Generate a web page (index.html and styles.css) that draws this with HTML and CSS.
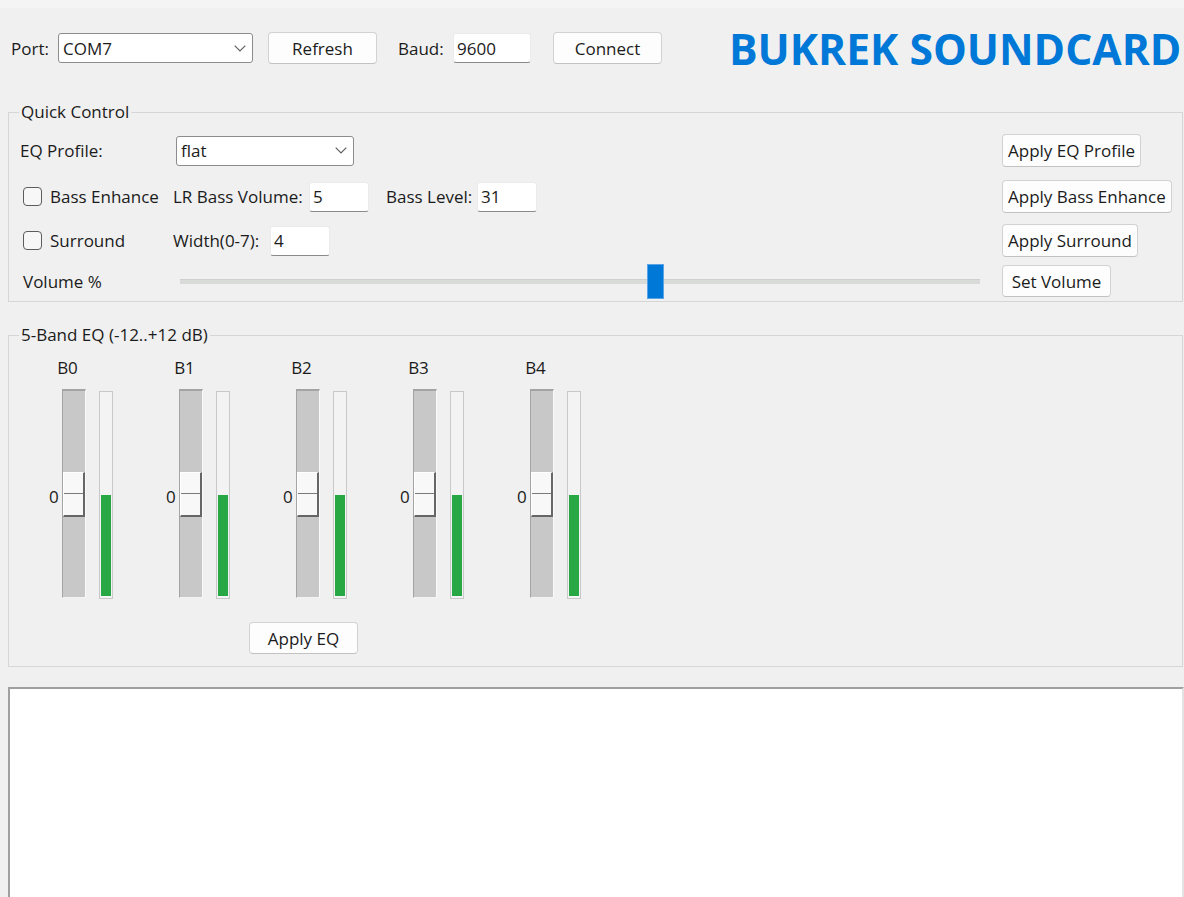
FILE: index.html
```html
<!DOCTYPE html>
<html lang="en">
<head>
<meta charset="utf-8">
<title>BUKREK SOUNDCARD</title>
<link rel="stylesheet" href="styles.css">
</head>
<body>
<div class="app">
  <div class="topbar">
    <span class="lbl lbl-port">Port:</span>
    <div class="combo combo-port"><span>COM7</span>
      <svg class="chev" width="12" height="7" viewBox="0 0 12 7"><polyline points="0.7,0.7 6,6 11.3,0.7" fill="none" stroke="#5f5f5f" stroke-width="1.2"/></svg>
    </div>
    <button class="btn btn-refresh">Refresh</button>
    <span class="lbl lbl-baud">Baud:</span>
    <div class="entry entry-baud">9600</div>
    <button class="btn btn-connect">Connect</button>
    <h1 class="title">BUKREK SOUNDCARD</h1>
  </div>

  <fieldset class="group group-quick">
    <legend>Quick Control</legend>
    <div class="quick-grid">
      <div class="cell c1 pad-eq">EQ Profile:</div>
      <div class="cell c2">
        <div class="combo combo-eq"><span>flat</span>
          <svg class="chev" width="12" height="7" viewBox="0 0 12 7"><polyline points="0.7,0.7 6,6 11.3,0.7" fill="none" stroke="#5f5f5f" stroke-width="1.2"/></svg>
        </div>
      </div>
      <div class="cell c3"><button class="btn btn-q">Apply EQ Profile</button></div>

      <div class="cell c1 pad-chk"><span class="chk"></span><span>Bass Enhance</span></div>
      <div class="cell c2">
        <span class="lbl lbl-lrbass">LR Bass Volume:</span>
        <div class="entry entry-sm">5</div>
        <span class="lbl lbl-basslevel">Bass Level:</span>
        <div class="entry entry-sm">31</div>
      </div>
      <div class="cell c3"><button class="btn btn-q">Apply Bass Enhance</button></div>

      <div class="cell c1 pad-chk"><span class="chk"></span><span>Surround</span></div>
      <div class="cell c2">
        <span class="lbl lbl-width">Width(0-7):</span>
        <div class="entry entry-sm">4</div>
      </div>
      <div class="cell c3"><button class="btn btn-q">Apply Surround</button></div>

      <div class="cell cell-last c1 pad-chk">Volume %</div>
      <div class="cell cell-last c2">
        <div class="slider" style="--v:0.597">
          <div class="track"></div>
          <div class="knob"></div>
        </div>
      </div>
      <div class="cell cell-last c3"><button class="btn">Set Volume</button></div>
    </div>
  </fieldset>

  <fieldset class="group group-eq">
    <legend>5-Band EQ (-12..+12 dB)</legend>
    <div class="bands">
      <div class="band">
        <div class="scale-col">
          <div class="band-name">B0</div>
          <div class="scale"><span class="scale-val">0</span><div class="trough"><div class="thumb"></div></div></div>
        </div>
        <div class="meter"><div class="meter-fill" style="height:50%"></div></div>
      </div>
      <div class="band">
        <div class="scale-col">
          <div class="band-name">B1</div>
          <div class="scale"><span class="scale-val">0</span><div class="trough"><div class="thumb"></div></div></div>
        </div>
        <div class="meter"><div class="meter-fill" style="height:50%"></div></div>
      </div>
      <div class="band">
        <div class="scale-col">
          <div class="band-name">B2</div>
          <div class="scale"><span class="scale-val">0</span><div class="trough"><div class="thumb"></div></div></div>
        </div>
        <div class="meter"><div class="meter-fill" style="height:50%"></div></div>
      </div>
      <div class="band">
        <div class="scale-col">
          <div class="band-name">B3</div>
          <div class="scale"><span class="scale-val">0</span><div class="trough"><div class="thumb"></div></div></div>
        </div>
        <div class="meter"><div class="meter-fill" style="height:50%"></div></div>
      </div>
      <div class="band">
        <div class="scale-col">
          <div class="band-name">B4</div>
          <div class="scale"><span class="scale-val">0</span><div class="trough"><div class="thumb"></div></div></div>
        </div>
        <div class="meter"><div class="meter-fill" style="height:50%"></div></div>
      </div>
    </div>
    <div class="eq-actions"><button class="btn">Apply EQ</button></div>
  </fieldset>

  <textarea class="log" readonly></textarea>
</div>
</body>
</html>
```

FILE: styles.css
```css
html, body {
  margin: 0;
  padding: 0;
}

body {
  width: 1184px;
  height: 897px;
  overflow: hidden;
  background: #f0f0f0;
  font-family: "Open Sans", "Noto Sans", sans-serif;
  font-size: 17px;
  color: #1b1b1b;
}

.app {
  border-top: 8px solid #f4f4f4;
}

/* ---------- top bar ---------- */
.topbar {
  display: flex;
  align-items: center;
  height: 32px;
  margin-top: 24px;
  padding-left: 11px;
  white-space: nowrap;
}

.lbl {
  white-space: nowrap;
}

.lbl-port { width: 47px; flex: none; }
.lbl-baud { width: 55px; flex: none; margin-left: 21px; }

.combo {
  box-sizing: border-box;
  display: flex;
  align-items: center;
  justify-content: space-between;
  height: 30px;
  padding: 0 6px 0 4px;
  background: #ffffff;
  border: 1px solid #8c8c8c;
  border-radius: 3px;
  flex: none;
}

.combo-port { width: 195px; }
.combo-eq { width: 178px; margin-left: 3px; }

.chev { display: block; }

.entry {
  box-sizing: border-box;
  display: flex;
  align-items: center;
  height: 30px;
  padding-left: 3px;
  background: #ffffff;
  border: 1px solid #ebebeb;
  border-bottom-color: #8a8a8a;
  border-radius: 3px;
  flex: none;
}

.entry-baud { width: 78px; }
.entry-sm { width: 60px; }

.btn {
  box-sizing: border-box;
  display: inline-flex;
  align-items: center;
  justify-content: center;
  height: 32px;
  min-width: 109px;
  padding: 0 5px;
  margin: 0;
  background: #fdfdfd;
  border: 1px solid #d2d2d2;
  border-bottom-color: #c2c2c2;
  border-radius: 4px;
  font: inherit;
  color: #1b1b1b;
  white-space: nowrap;
  flex: none;
}

.btn-q { height: 33px; }
.btn-refresh { margin-left: 15px; }
.btn-connect { margin-left: 22px; }

.title {
  margin: 0 0 0 67px;
  font-size: 42.6px;
  line-height: 1;
  font-weight: 700;
  color: #0078d7;
  white-space: nowrap;
}

/* ---------- group frames ---------- */
.group {
  box-sizing: border-box;
  width: 1175px;
  min-width: 0;
  margin: 0 0 0 8px;
  border: 1px solid #d6d6d6;
}

.group legend {
  margin-left: 10px;
  padding: 0 2px;
  line-height: 20px;
  font-size: 17px;
}

.group-quick {
  margin-top: 38px;
  padding: 12px 0 4px 0;
}

.group-eq {
  margin-top: 23px;
  padding: 13px 0 12px 0;
}

/* ---------- quick control grid ---------- */
.quick-grid {
  display: grid;
  grid-template-columns: 164px 829px auto;
  grid-template-rows: 46px 44px 41px 32px;
  align-items: start;
}

.cell {
  display: flex;
  align-items: center;
  height: 33px;
  white-space: nowrap;
}

.cell-last { height: 32px; }

.pad-eq { padding-left: 11px; }
.pad-chk { padding-left: 14px; }

.chk {
  box-sizing: border-box;
  width: 19px;
  height: 19px;
  margin-right: 8px;
  background: #f7f7f7;
  border: 1px solid #5c5c5c;
  border-radius: 4px;
  flex: none;
}

.lbl-lrbass { width: 136px; flex: none; }
.lbl-basslevel { width: 91px; margin-left: 17px; flex: none; }
.lbl-width { width: 97px; flex: none; }

/* ---------- volume slider ---------- */
.slider {
  position: relative;
  display: flex;
  align-items: center;
  width: 800px;
  height: 35px;
  margin-left: 7px;
}

.track {
  width: 100%;
  height: 4px;
  background: #d9dbd9;
  border-top: 1px solid #cdd0cd;
}

.knob {
  position: absolute;
  top: 0;
  left: calc(var(--v) * (100% - 17px));
  box-sizing: border-box;
  width: 17px;
  height: 35px;
  background: #0078d7;
  border: 1px solid #5aa3e6;
}

/* ---------- EQ bands ---------- */
.bands {
  display: flex;
  gap: 53px;
  padding-left: 40px;
}

.band {
  display: flex;
  align-items: flex-start;
  gap: 13px;
}

.scale-col {
  display: flex;
  flex-direction: column;
  align-items: center;
  width: 37px;
}

.band-name {
  line-height: 20px;
  height: 20px;
  margin-bottom: 11px;
}

.scale {
  display: flex;
  align-items: center;
}

.scale-val {
  width: 13px;
  flex: none;
  margin-top: 6px;
}

.trough {
  box-sizing: border-box;
  display: flex;
  align-items: center;
  justify-content: center;
  width: 24px;
  height: 209px;
  background: #c8c8c8;
  border: 1px solid;
  border-color: #a4a4a4 #fafafa #f4f4f4 #a4a4a4;
  border-top-width: 2px;
}

.thumb {
  box-sizing: border-box;
  width: 22px;
  height: 45px;
  background: linear-gradient(to bottom, transparent 20px, #7a7a7a 20px, #7a7a7a 21px, transparent 21px) #f8f8f8;
  border-top: 1px solid #ffffff;
  border-left: 1px solid #ffffff;
  border-right: 2px solid #666666;
  border-bottom: 2px solid #666666;
}

.meter {
  box-sizing: border-box;
  display: flex;
  flex-direction: column;
  justify-content: flex-end;
  width: 14px;
  height: 208px;
  margin-top: 33px;
  padding: 1px 1px 2px 1px;
  background: #f3f3f3;
  border: 1px solid #c8c8c8;
}

.meter-fill {
  width: 100%;
  background: #28a745;
}

.eq-actions {
  margin-top: 23px;
  padding-left: 240px;
}

/* ---------- log ---------- */
.log {
  display: block;
  box-sizing: border-box;
  width: 1176px;
  height: 230px;
  margin: 20px 0 0 8px;
  padding: 2px;
  background: #ffffff;
  border-style: solid;
  border-width: 2px;
  border-color: #a0a0a0 #e3e3e3 #e3e3e3 #a0a0a0;
  border-radius: 0;
  resize: none;
  outline: none;
  font: inherit;
}
```
